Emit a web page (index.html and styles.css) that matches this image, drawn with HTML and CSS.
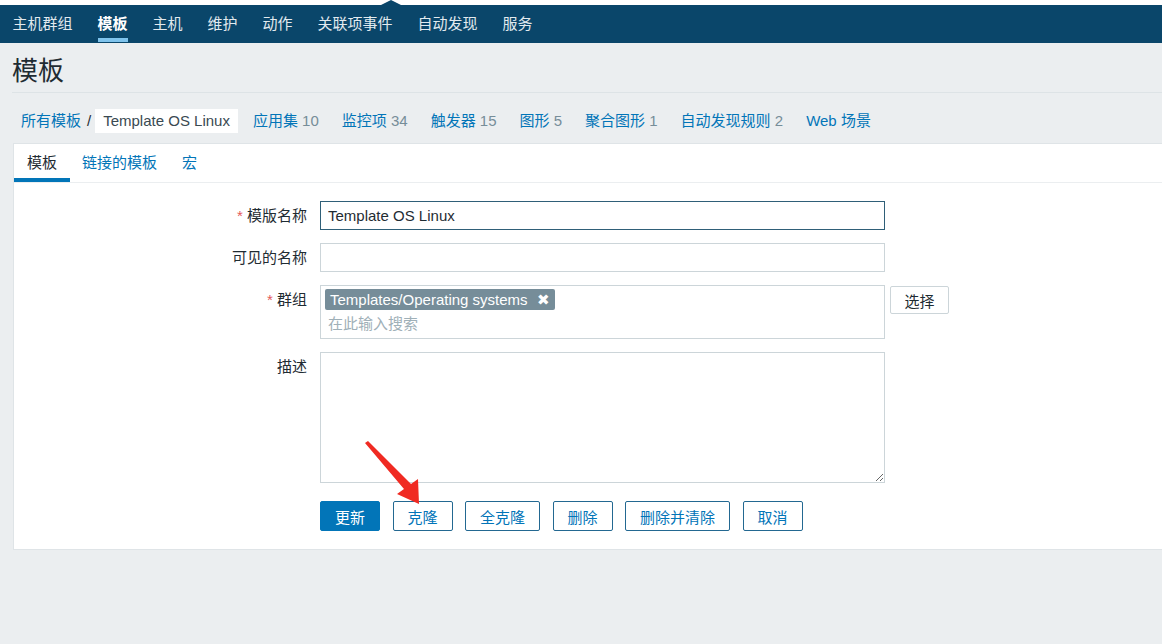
FILE: index.html
```html
<!DOCTYPE html>
<html lang="zh-CN">
<head>
    <meta charset="UTF-8">
    <meta name="viewport" content="width=device-width, initial-scale=1.0">
    <title>模板</title>
    <link rel="stylesheet" href="styles.css">
</head>
<body>
    <div class="top-strip"><span class="notch"></span></div>
    <nav class="top-nav">
        <a href="#">主机群组</a>
        <a href="#" class="selected">模板</a>
        <a href="#">主机</a>
        <a href="#">维护</a>
        <a href="#">动作</a>
        <a href="#">关联项事件</a>
        <a href="#">自动发现</a>
        <a href="#">服务</a>
    </nav>

    <header class="header">
        <h1>模板</h1>
    </header>

    <ul class="breadcrumbs">
        <li class="crumb-first"><a href="#">所有模板</a><span class="sep">/</span></li>
        <li class="crumb-current">Template OS Linux</li>
        <li><a href="#">应用集</a> <span class="count">10</span></li>
        <li><a href="#">监控项</a> <span class="count">34</span></li>
        <li><a href="#">触发器</a> <span class="count">15</span></li>
        <li><a href="#">图形</a> <span class="count">5</span></li>
        <li><a href="#">聚合图形</a> <span class="count">1</span></li>
        <li><a href="#">自动发现规则</a> <span class="count">2</span></li>
        <li><a href="#">Web 场景</a></li>
    </ul>

    <div class="panel">
        <ul class="tabs">
            <li class="active">模板</li>
            <li><a href="#">链接的模板</a></li>
            <li><a href="#">宏</a></li>
        </ul>

        <form class="form">
            <label class="form-label"><span class="req">*</span> 模版名称</label>
            <div class="form-field">
                <input type="text" class="text-input focused" value="Template OS Linux">
            </div>

            <label class="form-label">可见的名称</label>
            <div class="form-field">
                <input type="text" class="text-input">
            </div>

            <label class="form-label"><span class="req">*</span> 群组</label>
            <div class="form-field field-inline">
                <div class="multiselect">
                    <span class="tag">Templates/Operating systems <span class="tag-remove">&#10006;</span></span>
                    <span class="ms-placeholder">在此输入搜索</span>
                </div>
                <button type="button" class="btn-grey">选择</button>
            </div>

            <label class="form-label">描述</label>
            <div class="form-field">
                <textarea class="text-area"></textarea>
            </div>

            <div></div>
            <div class="form-buttons">
                <button type="button" class="btn-main">更新</button>
                <button type="button" class="btn-alt">克隆</button>
                <button type="button" class="btn-alt">全克隆</button>
                <button type="button" class="btn-alt">删除</button>
                <button type="button" class="btn-alt">删除并清除</button>
                <button type="button" class="btn-alt">取消</button>
            </div>
        </form>
    </div>

    <!-- red annotation arrow -->
    <svg class="annotation" width="1162" height="644" viewBox="0 0 1162 644">
        <polygon points="365,443 368,441 411,484 418,479 419,504 397,494 404,489" fill="#f02a22"/>
    </svg>
</body>
</html>
```

FILE: styles.css
```css
body {
    margin: 0;
    font-family: "Liberation Sans", "Noto Sans CJK SC", sans-serif;
    font-size: 15px;
    color: #1f2c33;
    background-color: #ebeef0;
    overflow: hidden;
}
a {
    color: #0275b8;
    text-decoration: none;
}
ul {
    list-style: none;
    margin: 0;
    padding: 0;
}

/* top */
.top-strip {
    height: 5px;
    background: #fff;
    position: relative;
}
.notch {
    position: absolute;
    left: 381px;
    top: 0;
    width: 0;
    height: 0;
    border-left: 10px solid transparent;
    border-right: 10px solid transparent;
    border-bottom: 5px solid #0a466a;
}
.top-nav {
    display: flex;
    height: 38px;
    background-color: #0a466a;
}
.top-nav a {
    display: block;
    padding: 0 12.5px;
    line-height: 37px;
    color: #e2eaef;
    position: relative;
}
.top-nav a.selected {
    color: #fff;
    font-weight: bold;
}
.top-nav a.selected::after {
    content: "";
    position: absolute;
    left: 12.5px;
    right: 12.5px;
    bottom: 1px;
    height: 4px;
    background: #7fc3ec;
}

.header {
    margin-left: 12px;
    height: 49px;
    border-bottom: 1px solid #dde3e6;
}
.header h1 {
    margin: 0;
    padding-top: 8px;
    font-size: 26px;
    font-weight: normal;
    line-height: 40px;
}

/* breadcrumbs */
.breadcrumbs {
    display: flex;
    align-items: center;
    margin-left: 13px;
    padding: 16px 0 10px;
    height: 24px;
}
.breadcrumbs li {
    padding: 0 8px;
    margin-right: 7px;
    line-height: 24px;
    white-space: nowrap;
}
.breadcrumbs .crumb-first {
    padding-right: 4px;
    margin-right: 0;
}
.sep {
    margin-left: 6px;
    color: #1f2c33;
}
.crumb-current {
    background: #fff;
    color: #3a4a52;
}
.count {
    color: #768d99;
}

/* panel */
.panel {
    margin-left: 13px;
    background: #fff;
    border: 1px solid #dfe4e7;
    border-right: 0;
    height: 405px;
}
.tabs {
    display: flex;
    height: 38px;
    border-bottom: 1px solid #ebeef0;
}
.tabs li {
    padding: 0 12.5px;
    line-height: 38px;
    position: relative;
}
.tabs li.active {
    padding-left: 13px;
}
.tabs li.active::after {
    content: "";
    position: absolute;
    left: 0;
    right: 0;
    bottom: 0;
    height: 4px;
    background: #0275b8;
}

/* form */
.form {
    display: grid;
    grid-template-columns: 293px 1fr;
    column-gap: 13px;
    row-gap: 13px;
    padding-top: 18px;
}
.form-label {
    text-align: right;
    line-height: 29px;
    white-space: nowrap;
}
.req {
    color: #e45959;
}
.field-inline {
    display: flex;
    align-items: flex-start;
}
.text-input {
    box-sizing: border-box;
    width: 565px;
    height: 29px;
    padding: 0 7px;
    border: 1px solid #ccd5d9;
    border-radius: 0;
    font-family: inherit;
    font-size: 15px;
    color: #1f2c33;
    outline: none;
}
.text-input.focused {
    border-color: #2f5f78;
}
.multiselect {
    box-sizing: border-box;
    flex: none;
    width: 565px;
    height: 54px;
    border: 1px solid #ccd5d9;
    padding: 3px 4px;
}
.tag {
    display: inline-block;
    background: #768d99;
    color: #fff;
    border-radius: 2px;
    padding: 0 5px;
    line-height: 21px;
}
.tag-remove {
    margin-left: 5px;
    font-size: 15px;
}
.ms-placeholder {
    display: block;
    padding-left: 3px;
    margin-top: 4px;
    color: #9fb0b8;
    line-height: 20px;
}
.btn-grey {
    flex: none;
    margin: 1px 0 0 5px;
    width: 59px;
    height: 28px;
    background: #fff;
    border: 1px solid #ccd5d9;
    border-radius: 2px;
    font-family: inherit;
    font-size: 15px;
    color: #1f2c33;
    padding: 0;
}
.text-area {
    display: block;
    box-sizing: border-box;
    width: 565px;
    height: 131px;
    border: 1px solid #ccd5d9;
    font-family: inherit;
    font-size: 15px;
    padding: 4px 7px;
    resize: both;
}
.form-buttons {
    display: flex;
    gap: 12.5px;
    margin-top: 5px;
}
.form-buttons button {
    height: 30px;
    padding: 0 14px;
    border-radius: 2px;
    font-family: inherit;
    font-size: 15px;
}
.btn-main {
    background: #0275b8;
    border: 1px solid #0275b8;
    color: #fff;
}
.btn-alt {
    background: #fff;
    border: 1px solid #236891;
    color: #0275b8;
}

.annotation {
    position: absolute;
    left: 0;
    top: 0;
    pointer-events: none;
}
```
